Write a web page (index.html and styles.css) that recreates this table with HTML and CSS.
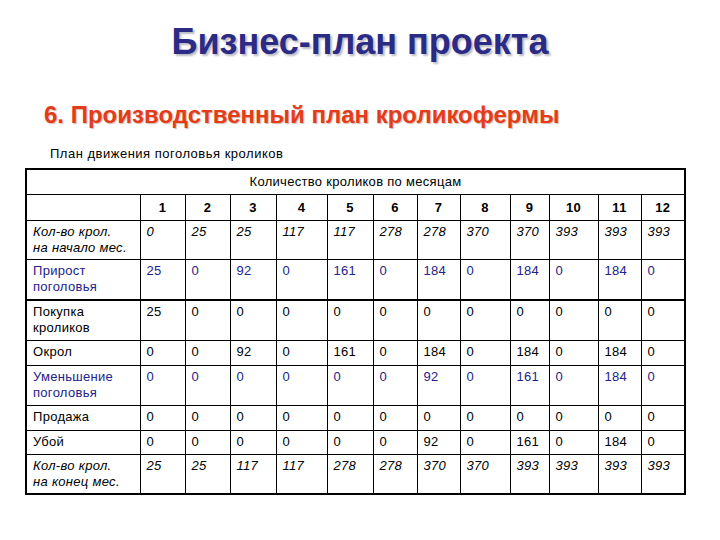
FILE: index.html
```html
<!DOCTYPE html>
<html lang="ru">
<head>
<meta charset="utf-8">
<title>Бизнес-план проекта</title>
<link rel="stylesheet" href="styles.css">
</head>
<body>
<div class="slide">
  <h1 class="title">Бизнес-план проекта</h1>
  <h2 class="subtitle">6. Производственный план кролико­фермы</h2>
  <p class="caption">План движения поголовья кроликов</p>
  <table class="plan">
    <colgroup>
      <col class="c-label">
      <col class="c45"><col class="c45"><col class="c46"><col class="c51">
      <col class="c46"><col class="c44"><col class="c43"><col class="c50">
      <col class="c39"><col class="c49"><col class="c43"><col class="c44">
    </colgroup>
    <tr class="r-head"><td colspan="13" class="head">Количество кроликов по месяцам</td></tr>
    <tr class="r-months"><td></td><td>1</td><td>2</td><td>3</td><td>4</td><td>5</td><td>6</td><td>7</td><td>8</td><td>9</td><td>10</td><td>11</td><td>12</td></tr>
    <tr class="it tight"><td>Кол-во крол.<br>на начало мес.</td><td>0</td><td>25</td><td>25</td><td>117</td><td>117</td><td>278</td><td>278</td><td>370</td><td>370</td><td>393</td><td>393</td><td>393</td></tr>
    <tr class="blue thick"><td>Прирост<br>поголовья</td><td>25</td><td>0</td><td>92</td><td>0</td><td>161</td><td>0</td><td>184</td><td>0</td><td>184</td><td>0</td><td>184</td><td>0</td></tr>
    <tr><td>Покупка<br>кроликов</td><td>25</td><td>0</td><td>0</td><td>0</td><td>0</td><td>0</td><td>0</td><td>0</td><td>0</td><td>0</td><td>0</td><td>0</td></tr>
    <tr class="one"><td>Окрол</td><td>0</td><td>0</td><td>92</td><td>0</td><td>161</td><td>0</td><td>184</td><td>0</td><td>184</td><td>0</td><td>184</td><td>0</td></tr>
    <tr class="blue"><td>Уменьшение<br>поголовья</td><td>0</td><td>0</td><td>0</td><td>0</td><td>0</td><td>0</td><td>92</td><td>0</td><td>161</td><td>0</td><td>184</td><td>0</td></tr>
    <tr class="one"><td>Продажа</td><td>0</td><td>0</td><td>0</td><td>0</td><td>0</td><td>0</td><td>0</td><td>0</td><td>0</td><td>0</td><td>0</td><td>0</td></tr>
    <tr><td>Убой</td><td>0</td><td>0</td><td>0</td><td>0</td><td>0</td><td>0</td><td>92</td><td>0</td><td>161</td><td>0</td><td>184</td><td>0</td></tr>
    <tr class="it tight"><td>Кол-во крол.<br>на конец мес.</td><td>25</td><td>25</td><td>117</td><td>117</td><td>278</td><td>278</td><td>370</td><td>370</td><td>393</td><td>393</td><td>393</td><td>393</td></tr>
  </table>
</div>
</body>
</html>
```

FILE: styles.css
```css
html, body {
  margin: 0;
  padding: 0;
  background: #ffffff;
}
.slide {
  width: 720px;
  height: 540px;
  font-family: "Liberation Sans", Arial, sans-serif;
  color: #000;
  overflow: hidden;
}
.title {
  margin: 22px 0 0 0;
  text-align: center;
  font-size: 36px;
  line-height: 40px;
  font-weight: bold;
  color: #2b2b85;
  text-shadow: 2px 2px 2px rgba(60, 60, 90, 0.35);
}
.subtitle {
  margin: 39px 0 0 44px;
  font-size: 24px;
  line-height: 28px;
  font-weight: bold;
  color: #e43c1a;
  text-shadow: 1px 1px 1px rgba(120, 60, 40, 0.35);
}
.caption {
  margin: 17px 0 0 50px;
  font-size: 13px;
  line-height: 15px;
  letter-spacing: 0.5px;
}
.plan {
  margin: 7px 0 0 25px;
  width: 659px;
  table-layout: fixed;
  border-collapse: collapse;
  border: 2px solid #000;
  font-size: 13px;
  line-height: 16px;
  letter-spacing: 0.3px;
}
.c-label { width: 114px; }
.c39 { width: 39px; }
.c43 { width: 43px; }
.c44 { width: 44px; }
.c45 { width: 45px; }
.c46 { width: 46px; }
.c49 { width: 49px; }
.c50 { width: 50px; }
.c51 { width: 51px; }
.plan td {
  border: 1px solid #000;
  padding: 3px 2px 4px 6px;
  vertical-align: top;
  text-align: left;
  white-space: nowrap;
}
.plan .head {
  text-align: center;
  padding: 4px 0 4px;
}
.r-months td {
  font-weight: bold;
  text-align: center;
  padding: 5px 0 4px;
}
.plan .one td { padding-bottom: 5px; }
.plan .tight td { padding-bottom: 3px; }
.it td { font-style: italic; }
.blue td { color: #22228a; }
.thick td { border-bottom: 2px solid #000; }
.plan tr:last-child td { border-bottom: 2px solid #000; }
```
